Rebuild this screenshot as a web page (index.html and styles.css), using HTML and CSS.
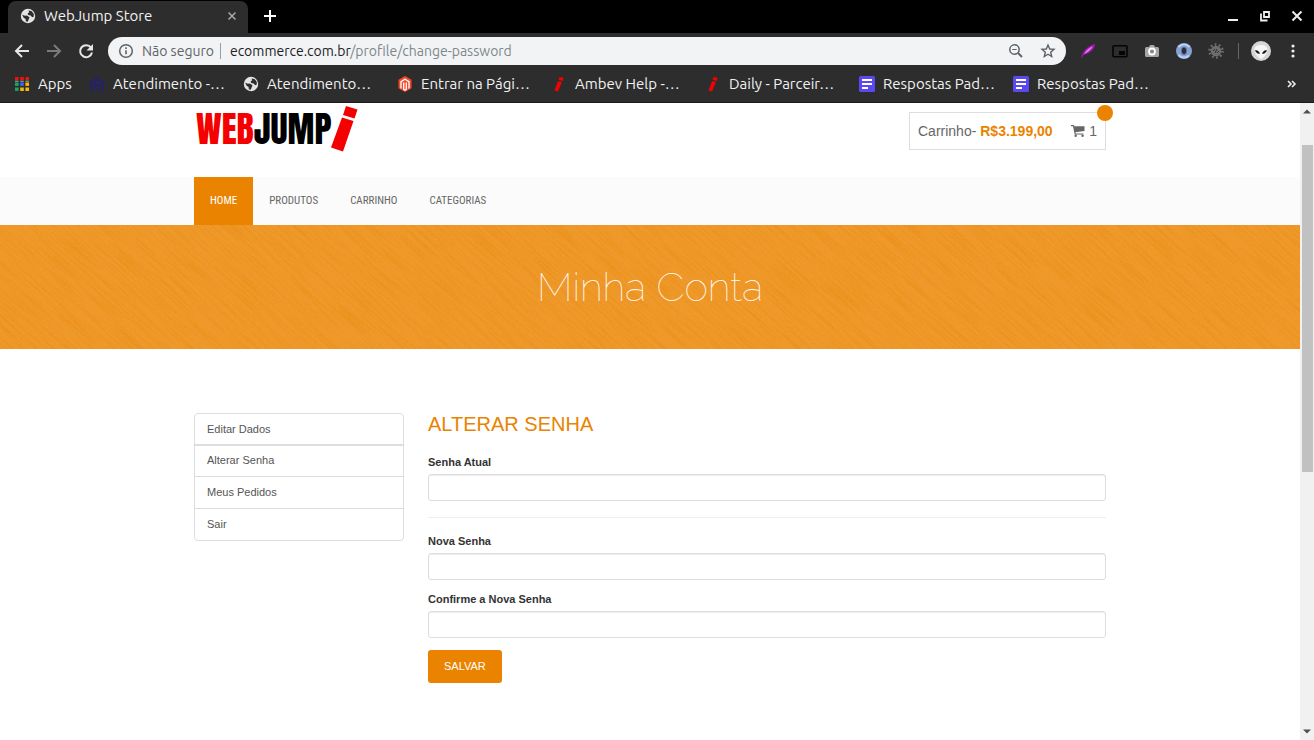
FILE: index.html
```html
<!DOCTYPE html>
<html lang="pt-BR">
<head>
<meta charset="utf-8">
<title>WebJump Store</title>
<link rel="stylesheet" href="styles.css">
</head>
<body>
<svg class="defs" width="0" height="0" aria-hidden="true">
  <symbol id="globe" viewBox="0 0 16 16">
    <circle cx="8" cy="8" r="7.200" fill="#e4e4e4"/>
    <path d="M2.200 6.800 5 7.800 6.800 7.400 8.400 8.600 9.600 9.400 8.800 11 7.800 13.800 5.800 13.200 5.600 11 3.600 9.800Z" fill="#2d2d2d"/>
    <path d="M8.400 2.400 11.400 3 13.600 5.600 13.900 8.400 12.200 9.200 10.600 7.600 8.200 7 7.600 5.400 9.200 4.200Z" fill="#2d2d2d"/>
  </symbol>
  <symbol id="bang" viewBox="0 0 16 16">
    <path d="M8.600.8 12.600 2 11.600 4.900 7.600 3.800ZM7.200 4.900 10.900 5.900 7 15.600 3.400 14.200Z" fill="#f50000"/>
  </symbol>
  <symbol id="form" viewBox="0 0 16 16">
    <rect width="16" height="16" rx="1.500" fill="#5b48f5"/>
    <path d="M3 4h10M3 8h10M3 12h6" stroke="#fff" stroke-width="2"/>
  </symbol>
</svg>

<header class="browser">
  <div class="tabs">
    <div class="tab">
      <svg class="icon16"><use href="#globe"/></svg>
      <span class="tab-title">WebJump Store</span>
      <button class="bare" aria-label="Fechar guia"><svg width="10" height="10" viewBox="0 0 10 10"><path d="M1.500 1.500 8.500 8.500M8.500 1.500 1.500 8.500" stroke="#a9a9a9" stroke-width="1.500"/></svg></button>
    </div>
    <button class="bare new-tab" aria-label="Nova guia"><svg width="14" height="14" viewBox="0 0 14 14"><path d="M7 1v12M1 7h12" stroke="#fff" stroke-width="2"/></svg></button>
    <div class="window-buttons">
      <button class="bare" aria-label="Minimizar"><svg width="12" height="12" viewBox="0 0 12 12"><path d="M1 10h10" stroke="#eee" stroke-width="2"/></svg></button>
      <button class="bare" aria-label="Restaurar"><svg width="12" height="12" viewBox="0 0 12 12"><path d="M5 2h5v5H5ZM2 3.500V10.500H8.500" fill="none" stroke="#eee" stroke-width="1.800"/></svg></button>
      <button class="bare" aria-label="Fechar"><svg width="12" height="12" viewBox="0 0 12 12"><path d="M1.500 1.500 10.500 10.500M10.500 1.500 1.500 10.500" stroke="#eee" stroke-width="2"/></svg></button>
    </div>
  </div>

  <div class="toolbar">
    <button class="bare" aria-label="Voltar"><svg width="16" height="16" viewBox="0 0 16 16"><path d="M15 8H2M8 2 2 8l6 6" fill="none" stroke="#e6e6e6" stroke-width="2"/></svg></button>
    <button class="bare" aria-label="Avançar"><svg width="16" height="16" viewBox="0 0 16 16"><path d="M1 8h13M8 2l6 6-6 6" fill="none" stroke="#7b7b7b" stroke-width="2"/></svg></button>
    <button class="bare" aria-label="Recarregar"><svg width="16" height="16" viewBox="0 0 16 16"><path d="M13 4.600A6 6 0 1 0 14 9.500" fill="none" stroke="#e6e6e6" stroke-width="2"/><path d="M15 1v6.500H8.500Z" fill="#e6e6e6"/></svg></button>
    <div class="address">
      <svg width="16" height="16" viewBox="0 0 16 16"><circle cx="8" cy="8" r="6.300" fill="none" stroke="#5f6368" stroke-width="1.500"/><path d="M8 7.200v4M8 4.300v1.600" stroke="#5f6368" stroke-width="1.600"/></svg>
      <span class="insecure">Não seguro</span>
      <span class="url">ecommerce.com.br<span class="path">/profile/change-password</span></span>
      <button class="bare" aria-label="Zoom"><svg width="16" height="16" viewBox="0 0 16 16"><circle cx="6.500" cy="6.500" r="4.700" fill="none" stroke="#5f6368" stroke-width="1.500"/><path d="m10 10 4 4" stroke="#5f6368" stroke-width="2"/><path d="M4.300 6.500h4.400" stroke="#5f6368"/></svg></button>
      <button class="bare" aria-label="Favorito"><svg width="16" height="16" viewBox="0 0 16 16"><path d="m8 2 1.700 4 4.300.4-3.300 2.800 1 4.300L8 11.200l-3.700 2.300 1-4.300L2 6.400 6.300 6Z" fill="none" stroke="#5f6368" stroke-width="1.400"/></svg></button>
    </div>
    <div class="extensions">
      <button class="bare" aria-label="Pena"><svg width="16" height="16" viewBox="0 0 16 16"><path d="M1 15.500C2 9 7 3 15 1c0 5-4 9-11 10.500Z" fill="#a712ba"/><path d="M4 11.500C6 7 9 5 13 3c-2 4-5 6-9 8.500Z" fill="#d982df"/></svg></button>
      <button class="bare" aria-label="Picture in picture"><svg width="16" height="16" viewBox="0 0 16 16"><rect x="1" y="2.700" width="14" height="11" rx="1" fill="none" stroke="#050505" stroke-width="1.600"/><rect x="7" y="8" width="6" height="4" fill="#050505"/></svg></button>
      <button class="bare" aria-label="Captura"><svg width="16" height="16" viewBox="0 0 16 16"><path d="M2.500 4H5l1-2h4l1 2h2.500q1.500 0 1.500 1.500v7q0 1.500-1.500 1.500h-11Q1 14 1 12.500v-7Q1 4 2.500 4Z" fill="#a5a5a5"/><circle cx="8" cy="8.500" r="3" fill="#888" stroke="#fff" stroke-width="1.800"/></svg></button>
      <button class="bare" aria-label="Anel"><svg width="16" height="16" viewBox="0 0 16 16"><circle cx="8" cy="8" r="8" fill="#86a2d3"/><path d="M2.500 4C5.500.5 10.500.5 13.500 4M2.500 12C5 15 10 15.300 13 12.500" fill="none" stroke="#bccfeb" stroke-width="2"/><ellipse cx="8" cy="7.800" rx="2.700" ry="3.800" fill="#2d2d2d" stroke="#5f7eb8" stroke-width="1"/></svg></button>
      <button class="bare" aria-label="Depurador"><svg width="16" height="16" viewBox="0 0 16 16"><circle cx="8" cy="8" r="5.200" fill="#6e6e6e"/><circle cx="8" cy="8" r="6.500" fill="none" stroke="#6e6e6e" stroke-width="2.600" stroke-dasharray="1.700 2.380"/><path d="m5 8 2-2m2 4 2-2M7 10l2-4" stroke="#2d2d2d"/></svg></button>
      <span class="divider"></span>
      <button class="bare" aria-label="Perfil"><svg width="20" height="20" viewBox="0 0 20 20"><circle cx="10" cy="10" r="10" fill="#d7d4d4"/><path d="M3.500 8C4 2.500 16 2.500 16.500 8c0 5-4 9-6.500 10C7.500 17 3.500 13 3.500 8Z" fill="#f5f5f5"/><path d="M4.500 9.500c2 0 3.500 1 4 3C6.500 12.500 5 11.500 4.500 9.500ZM15.500 9.500c-2 0-3.500 1-4 3 2 0 3.500-1 4-3Z" fill="#111" stroke="#111" stroke-width=".6"/></svg></button>
      <button class="bare menu" aria-label="Menu"><svg width="4" height="14" viewBox="0 0 4 14"><g fill="#eee"><circle cx="2" cy="2" r="1.600"/><circle cx="2" cy="7" r="1.600"/><circle cx="2" cy="12" r="1.600"/></g></svg></button>
    </div>
  </div>

  <nav class="bookmarks" aria-label="Favoritos">
    <a class="apps" href="#"><svg class="icon16" viewBox="0 0 16 16"><path d="M1 2.600h14" stroke="#f01010" stroke-width="3" stroke-dasharray="3.600 1.600"/><path d="M1 5.200h14" stroke="#aaa" stroke-dasharray="3.600 1.600"/><path d="M1 8.200h3.600" stroke="#18a860" stroke-width="3.400"/><path d="M6.200 8.200h3.600" stroke="#4068f0" stroke-width="3.400"/><path d="M11.400 8.200H15" stroke="#f5b90c" stroke-width="3.400"/><path d="M1 13.200h3.600" stroke="#18a860" stroke-width="3.400"/><path d="M6.200 13.200H15" stroke="#f5b90c" stroke-width="3.400" stroke-dasharray="3.600 1.600"/></svg>Apps</a>
    <a href="#"><svg class="icon16" viewBox="0 0 16 16"><path d="M5.500 4.500Q5.500 2 8 2t2.500 2.500M3.500 5h9l1.500 3v4q0 2-2 2H4q-2 0-2-2V8ZM5.500 7v5m5-5v5M5.500 9.500h5" fill="none" stroke="#201a91" stroke-width="1.200"/></svg>Atendimento -…</a>
    <a href="#"><svg class="icon16"><use href="#globe"/></svg>Atendimento…</a>
    <a href="#"><svg class="icon16" viewBox="0 0 16 16"><path d="m8 0 6.500 3.700v8.600L8 16l-6.500-3.700V3.700Z" fill="#f04a28"/><path d="M4 12.500V5.700L8 3.300l4 2.400v6.800M6.700 6.500v7L8 14.300l1.300-.8v-7" fill="none" stroke="#fff" stroke-width="1.300"/></svg>Entrar na Pági…</a>
    <a href="#"><svg class="icon16"><use href="#bang"/></svg>Ambev Help -…</a>
    <a href="#"><svg class="icon16"><use href="#bang"/></svg>Daily - Parceir…</a>
    <a href="#"><svg class="icon16"><use href="#form"/></svg>Respostas Pad…</a>
    <a href="#"><svg class="icon16"><use href="#form"/></svg>Respostas Pad…</a>
    <button class="bare more" aria-label="Mais favoritos"><svg width="10" height="10" viewBox="0 0 10 10"><path d="m1 2 3 3-3 3m4-6 3 3-3 3" fill="none" stroke="#eee" stroke-width="1.600"/></svg></button>
  </nav>
</header>

<div class="viewport">
  <div class="page">
    <header class="container site-header">
      <a class="logo" href="#" aria-label="WebJump">
        <span class="wordmark"><span class="web">WEB</span>JUMP</span>
        <svg width="27" height="46" viewBox="0 0 27 46"><path d="M15 0 26.500 3.500 23.500 12.500 12 9ZM11 11.500 22.500 15 12 45.500 0 41.500Z" fill="#f50000"/></svg>
      </a>
      <a class="cart" href="#">
        <span>Carrinho- <strong>R$3.199,00</strong></span>
        <span class="cart-count"><svg width="14" height="12" viewBox="0 0 14 12"><path d="M0 0h2.700q.5 0 .6 1.200H13.500V6L4.400 7.200 4.700 8.400H12.400V9.500H3.700L2 1.200H0Z" fill="#666"/><circle cx="4.700" cy="10.800" r="1.200" fill="#666"/><circle cx="11.600" cy="10.800" r="1.200" fill="#666"/></svg> 1</span>
        <span class="badge"></span>
      </a>
    </header>

    <nav class="main-nav">
      <div class="container nav-list">
        <a class="active" href="#">HOME</a>
        <a href="#">PRODUTOS</a>
        <a href="#">CARRINHO</a>
        <a href="#">CATEGORIAS</a>
      </div>
    </nav>

    <div class="banner">
      <svg class="texture" aria-hidden="true">
        <filter id="fibres" x="0" y="0" width="100%" height="100%" color-interpolation-filters="sRGB">
          <feTurbulence type="fractalNoise" baseFrequency="0.02 0.6" numOctaves="2" seed="8"/>
          <feColorMatrix values="0 0 0 0 0.91  0 0 0 0 0.52  0 0 0 0 0.02  3 0 0 0 -1.300"/>
        </filter>
        <filter id="grain" x="0" y="0" width="100%" height="100%" color-interpolation-filters="sRGB">
          <feTurbulence type="fractalNoise" baseFrequency="0.5" numOctaves="2" seed="3"/>
          <feColorMatrix values="0 0 0 0 0.94  0 0 0 0 0.64  0 0 0 0 0.24  2 0 0 0 -0.800"/>
        </filter>
        <rect x="-100" y="-1500" width="2600" height="2600" transform="rotate(42)" filter="url(#fibres)" opacity="0.400"/>
        <rect width="100%" height="100%" filter="url(#grain)" opacity="0.400"/>
      </svg>
      <h1>Minha Conta</h1>
    </div>

    <main class="container content">
      <nav class="side-menu" aria-label="Minha conta">
        <a href="#">Editar Dados</a>
        <a href="#">Alterar Senha</a>
        <a href="#">Meus Pedidos</a>
        <a href="#">Sair</a>
      </nav>
      <form class="password-form">
        <h2>ALTERAR SENHA</h2>
        <div class="field">
          <label for="current">Senha Atual</label>
          <input id="current" type="password">
        </div>
        <hr>
        <div class="field">
          <label for="new">Nova Senha</label>
          <input id="new" type="password">
        </div>
        <div class="field">
          <label for="confirm">Confirme a Nova Senha</label>
          <input id="confirm" type="password">
        </div>
        <button class="save" type="button">SALVAR</button>
      </form>
    </main>
  </div>
  <div class="scrollbar" aria-hidden="true">
    <svg width="8" height="5" viewBox="0 0 8 5"><path d="M0 4.500 4 .5l4 4Z" fill="#505050"/></svg>
    <span class="track"><span class="thumb"></span></span>
    <svg width="8" height="5" viewBox="0 0 8 5"><path d="M0 .5h8l-4 4Z" fill="#505050"/></svg>
  </div>
</div>
</body>
</html>
```

FILE: styles.css
```css
* { box-sizing: border-box; }

body {
  margin: 0;
  height: 100vh;
  display: flex;
  flex-direction: column;
  overflow: hidden;
  background: #fff;
  font-family: "Liberation Sans", Arial, sans-serif;
  font-size: 11px;
  line-height: 16px;
  color: #333;
}

a { color: inherit; text-decoration: none; }
svg { display: block; flex: none; }
.defs { position: absolute; }
.icon16 { width: 16px; height: 16px; }

.bare {
  display: flex;
  align-items: center;
  justify-content: center;
  padding: 0;
  border: 0;
  background: none;
}

/* Browser frame */
.browser {
  flex: none;
  background: #2d2d2d;
  border-bottom: 1px solid #1b1b1b;
  color: #f2f2f2;
  font-family: Ubuntu, "Noto Sans", sans-serif;
  font-size: 15px;
  line-height: 20px;
}

.tabs {
  display: flex;
  align-items: center;
  height: 33px;
  padding: 0 11px 1px 8px;
  background: #000;
}

.tab {
  display: flex;
  align-items: center;
  align-self: flex-end;
  gap: 8px;
  width: 240px;
  height: 32px;
  margin-bottom: -1px;
  padding: 0 11px 2px 12px;
  border-radius: 8px 8px 0 0;
  background: #2d2d2d;
}

.tab-title { flex: 1; }
.new-tab { margin-left: 15px; }
.window-buttons { display: flex; gap: 20px; margin-left: auto; }

.toolbar {
  display: flex;
  align-items: center;
  gap: 16px;
  height: 36px;
  padding: 0 19px 0 14px;
}

.address {
  flex: 1;
  display: flex;
  align-items: center;
  gap: 16px;
  height: 28px;
  margin-left: -2px;
  padding: 0 10px;
  border-radius: 14px;
  background: #f1f3f4;
  font-size: 14px;
}

.insecure {
  margin-left: -8px;
  padding-right: 6px;
  border-right: 1px solid #9a9da0;
  line-height: 16px;
  color: #5f6368;
}

.url { flex: 1; margin-left: -7px; color: #202124; }
.path { color: #80868b; }

.extensions { display: flex; align-items: center; gap: 16px; margin-left: -2px; }
.divider { width: 1px; height: 16px; margin: 0 -4px 0 -2px; background: #666; }
.menu { margin-left: 4px; }

.bookmarks {
  display: flex;
  align-items: center;
  height: 33px;
  padding: 0 17px 3px 14px;
}

.bookmarks a {
  display: flex;
  align-items: center;
  gap: 8px;
  width: 154px;
  white-space: nowrap;
}

.bookmarks .apps { width: 75px; }
.more { margin-left: auto; }

/* Page and scrollbar */
.viewport { flex: 1; display: flex; min-height: 0; }
.page { flex: 1; overflow: hidden; }

.scrollbar {
  display: flex;
  flex-direction: column;
  align-items: center;
  width: 14px;
  padding: 6px 1px;
  background: #f1f1f1;
}

.track { flex: 1; align-self: stretch; padding: 31px 0 0 1px; }
.thumb { display: block; width: 11px; height: 56%; background: #c1c1c1; }

.container { max-width: 912px; margin: 0 auto; }

/* Site header */
.site-header {
  display: flex;
  justify-content: space-between;
  align-items: flex-start;
  height: 74px;
}

.logo { display: flex; padding: 3px 0 0 2px; }

.wordmark {
  padding-top: 4px;
  font-family: Anton, "Roboto Condensed", sans-serif;
  font-size: 36px;
  line-height: 38px;
  color: #000;
}

.web { color: #f50000; }

.cart {
  position: relative;
  display: flex;
  justify-content: space-between;
  min-width: 197px;
  margin-top: 9px;
  padding: 8px;
  border: 1px solid #ddd;
  font-size: 14px;
  line-height: 20px;
  color: #666;
}

.cart strong { color: #ea8300; }
.cart-count { display: flex; align-items: center; gap: 4px; }

.badge {
  position: absolute;
  top: -8px;
  right: -8px;
  width: 16px;
  height: 16px;
  border-radius: 50%;
  background: #ea8300;
}

/* Navigation */
.main-nav { background: #fbfbfb; }

.nav-list {
  display: flex;
  font-family: "Roboto Condensed", "Liberation Sans Narrow", sans-serif;
  font-size: 11px;
  line-height: 16px;
  color: #666;
}

.nav-list a { padding: 16px; }
.nav-list .active { background: #ea8300; color: #fff; }

/* Title banner */
.banner {
  position: relative;
  overflow: hidden;
  padding: 38px 0;
  background: #ee9829;
}

.texture { position: absolute; inset: 0; width: 100%; height: 100%; }

.banner h1 {
  position: relative;
  margin: 0;
  font-family: Raleway, Lato, sans-serif;
  font-size: 40px;
  font-weight: 100;
  line-height: 48px;
  text-align: center;
  color: #fff;
}

/* Account area */
.content {
  display: grid;
  grid-template-columns: 210px 1fr;
  gap: 24px;
  align-items: start;
  padding-top: 64px;
}

.side-menu {
  border: 1px solid #ddd;
  border-radius: 4px;
  color: #555;
}

.side-menu a {
  display: block;
  padding: 7px 12px 8px;
  border-top: 1px solid #ddd;
}

.side-menu a:first-child { padding-bottom: 7px; border-top: 0; }
.side-menu a:nth-child(2) { box-shadow: inset 0 1px #ddd; }

.password-form h2 {
  margin: 0 0 19px;
  font-size: 20px;
  font-weight: 400;
  line-height: 22px;
  color: #ea8300;
}

.field { margin-bottom: 11px; }
.field label { display: block; margin-bottom: 4px; font-weight: 700; }

.field input {
  display: block;
  width: 100%;
  height: 27px;
  padding: 4px 8px;
  border: 1px solid #ddd;
  border-radius: 3px;
  background: #fff;
  box-shadow: inset 0 1px 1px rgba(0, 0, 0, .075);
}

.password-form hr {
  margin: 16px 0 15px;
  border: 0;
  border-top: 1px solid #eee;
}

.save {
  display: block;
  height: 33px;
  margin-top: 12px;
  padding: 0 16px 1px;
  border: 0;
  border-radius: 3px;
  background: #ea8300;
  font: inherit;
  color: #fff;
}
```
